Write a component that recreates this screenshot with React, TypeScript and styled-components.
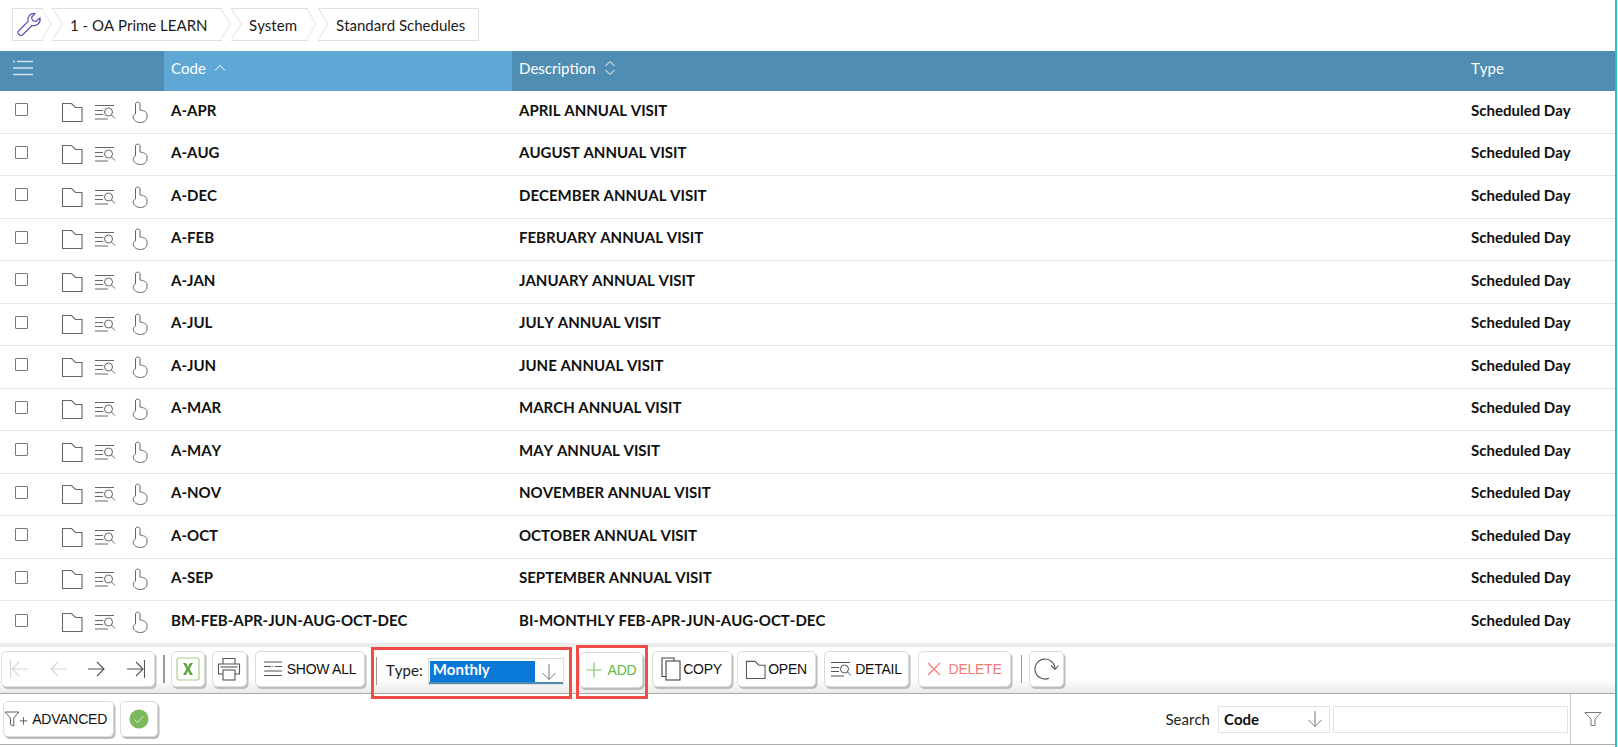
import React from "react";
import styled, { createGlobalStyle } from "styled-components";

const Global = createGlobalStyle`
  html, body { margin: 0; padding: 0; background: #fff; overflow: hidden; }
  body { font-family: Lato, "Open Sans", sans-serif; color: #111; font-kerning: none; }
`;

const Page = styled.div`
  width: 1618px; height: 747px; box-sizing: border-box; display: flex; flex-direction: column;
  overflow: hidden; position: relative;
`;
const RightEdge = styled.div`
  position: absolute; top: 0; bottom: 0; right: 1px; width: 2px; background: #2fbcc9;
`;
const Main = styled.div`width: 1615px; display: flex; flex-direction: column; flex: 1; min-height: 0; padding-bottom: 2px;`;

const Breadcrumbs = styled.nav`
  height: 51px; box-sizing: border-box; padding: 8px 0 10px 12px; display: flex; align-items: stretch; flex-shrink: 0;
`;
const Crumb = styled.div<{ $first?: boolean; $last?: boolean; $w: number; $ml: number; $pl: number }>`
  position: relative; box-sizing: border-box; width: ${p => p.$w}px; margin-left: ${p => p.$ml}px;
  padding-left: ${p => p.$pl}px; display: flex; align-items: center;
  border: 1.5px solid #e0e0e0; border-right-width: ${p => (p.$last ? "1.5px" : "0")};
  border-left-width: ${p => (p.$first ? "1.5px" : "0")};
  font-size: 15px; color: #1b1b1b; white-space: nowrap; background: transparent;
  &::after {
    content: ${p => (p.$last ? "none" : '""')}; position: absolute; right: -10px; top: 4px; width: 22px; height: 22px;
    box-sizing: border-box; border-top: 1.5px solid #e0e0e0; border-right: 1.5px solid #e0e0e0;
    background: #fff; transform: scaleX(0.62) rotate(45deg); z-index: 1;
  }
  &::before {
    content: ${p => (p.$first ? "none" : '""')}; position: absolute; left: -10px; top: 4px; width: 22px; height: 22px;
    box-sizing: border-box; border-top: 1.5px solid #e0e0e0; border-right: 1.5px solid #e0e0e0;
    background: transparent; transform: scaleX(0.62) rotate(45deg);
  }
`;
const WrenchSlot = styled.span`display: inline-flex; position: relative; z-index: 2;`;

const HeaderRow = styled.div`
  display: grid; grid-template-columns: 164px 348px 952px 151px; height: 40px; background: #4f8db3;
  color: #fff; font-size: 15px; flex-shrink: 0;
`;
const HeaderCell = styled.div<{ $active?: boolean }>`
  display: flex; align-items: center; gap: 8px; padding: 0 0 6px 7px; box-sizing: border-box;
  background: ${p => (p.$active ? "#5fa8d6" : "transparent")};
`;
const HeaderIconCell = styled.div`display: flex; align-items: center; padding: 0 0 6px 12px;`;

const Row = styled.div`
  display: grid; grid-template-columns: 164px 348px 952px 151px; height: 42.5px; box-sizing: border-box;
  border-bottom: 1.5px solid #e6e6e6; align-items: center; font-size: 15px; font-weight: 700; color: #111;
  flex-shrink: 0; &:last-of-type { border-bottom: none; }
`;
const Actions = styled.div`display: flex; align-items: center; padding-left: 15px;`;
const Check = styled.div`
  width: 13px; height: 13px; box-sizing: border-box; border: 1.5px solid #777; border-radius: 1px; margin-right: 33px; margin-top: -4px;
`;
const Cell = styled.div`padding-left: 7px; white-space: nowrap; margin-top: -4px;`;
const ActionIcon = styled.span<{ $mr: number }>`display: inline-flex; margin-right: ${p => p.$mr}px;`;

const Rows = styled.div`flex: 1; min-height: 0; overflow: hidden;`;

const Toolbar = styled.div`
  height: 51px; box-sizing: border-box; flex-shrink: 0; display: flex; align-items: center; padding: 0 0 2px 1px;
  background: linear-gradient(#fff 0, #fff 70%, #e9e9e9 100%);
  border-top: 4px solid #ececec; border-bottom: 1.5px solid #aaa;
  position: relative;
`;
const BtnBase = styled.button<{ $w: number; $ml?: number; $color?: string; $gap?: number; $mt?: number; $pr?: number }>`
  width: ${p => p.$w}px; height: 36px; margin-left: ${p => p.$ml ?? 0}px; margin-top: ${p => p.$mt ?? 0}px; box-sizing: border-box; flex-shrink: 0;
  display: inline-flex; align-items: center; justify-content: center; gap: ${p => p.$gap ?? 4}px; padding: 0 ${p => p.$pr ?? 0}px 0 0;
  background: #fff; border: 1px solid #dcdcdc; border-radius: 5px; box-shadow: 1.5px 2px 0 #bdbdbd;
  font-family: "Liberation Sans", Arial, sans-serif; font-size: 14px; letter-spacing: -0.25px; color: ${p => p.$color ?? "#111"};
`;
const Nav = styled(BtnBase)`justify-content: space-between; padding: 0 8px 0 7px;`;
const Sep = styled.div<{ $ml: number; $mt?: number }>`width: 1.5px; height: 28px; background: #9a9a9a; margin-left: ${p => p.$ml}px; margin-top: ${p => p.$mt ?? 0}px; flex-shrink: 0;`;
const Annotated = styled.div<{ $w: number; $ml: number; $h: number; $mt: number }>`
  width: ${p => p.$w}px; height: ${p => p.$h}px; margin-left: ${p => p.$ml}px; margin-top: ${p => p.$mt}px; box-sizing: border-box; flex-shrink: 0;
  border: 3px solid #ef4b47; display: flex; align-items: center; position: relative; z-index: 2;
`;
const TypeLabel = styled.span`font-size: 15px; color: #1b1b1b; margin-left: 9px; margin-top: -6px;`;
const TypeSelect = styled.div`
  width: 136px; height: 27px; margin-left: 5px; margin-top: -3px; box-sizing: border-box; border: 1px solid #ddd; padding: 2px 1px 1px 1px;
  display: flex; align-items: stretch; justify-content: space-between; position: relative; box-shadow: inset 0 -2px 0 #4f8db3; background: #fff;
`;
const Highlight = styled.span`
  display: block; width: 105px; height: 21px; background: #0a78d7; color: #fff; font-weight: 700; font-size: 15px; padding-left: 3px; line-height: 17px; box-sizing: border-box;
`;
const SelectArrow = styled.span`display: inline-flex; margin-right: 5px; align-items: center;`;

const BottomBar = styled.div`
  height: 51px; box-sizing: border-box; flex-shrink: 0; display: flex; align-items: center; padding: 0 0 0 3px; border-bottom: 1.5px solid #aaa; position: relative;
`;
const Spacer = styled.div`flex: 1;`;
const SearchLabel = styled.span`font-size: 15px; color: #222; margin-right: 8px;`;
const SearchSelect = styled.div`
  width: 112px; height: 27px; box-sizing: border-box; border: 1px solid #e2e2e2; display: flex; align-items: center; justify-content: space-between;
  font-size: 15px; font-weight: 700; padding: 0 6px 0 5px; color: #111;
`;
const SearchInput = styled.input`
  width: 235px; height: 27px; margin-left: 3px; box-sizing: border-box; border: 1px solid #e2e2e2; background: #fff; outline: none;
`;
const FilterBox = styled.div`
  width: 45px; height: 100%; margin-left: 2px; border-left: 1.5px solid #c9c9c9; display: flex; align-items: center; justify-content: center; box-sizing: border-box;
`;

const Folder = ({ s = 22, c = "#666" }: { s?: number; c?: string }) => (
  <svg width={s} height={s} viewBox="0 0 22 22" fill="none" stroke={c} strokeWidth="1.1">
    <path d="M1.5 20.5V2.5H10.5L14.5 6.5H21V20.5Z" />
  </svg>
);
const Detail = ({ c = "#666" }: { c?: string }) => (
  <svg width="22" height="18" viewBox="0 0 22 18" fill="none" stroke={c} strokeWidth="1">
    <path d="M1 2.5H20M1 7.5H9M1 11.5H9M1 16H14" />
    <circle cx="14.5" cy="9" r="4" />
    <path d="M17.5 12L21 15.5" />
  </svg>
);
const Hand = () => (
  <svg width="16" height="22" viewBox="0 0 16 22" fill="none" stroke="#666" strokeWidth="1">
    <path d="M3.5 13V3C3.5 .5 8 .5 8 3V9C11 9.5 15 10.5 15 13.5V16C15 19.5 12 21.5 8.500 21.5C5 21.5 1.200 19.5 1.200 16C1.200 15 2 13.800 3.500 13Z" />
  </svg>
);
const Wrench = () => (
  <svg width="26" height="26" viewBox="0 0 26 26" fill="none" stroke="#6a4fb8" strokeWidth="1.2">
    <path d="M2.500 19L12 9.500C11 5 14 1 19 1.500L15.500 5.500L16.500 8.500L20 9.500L24 6C25 11 20.500 14.500 16 13.500L6.500 23C4.500 25 .5 21 2.500 19Z" />
  </svg>
);
const ListIcon = () => (
  <svg width="22" height="16" viewBox="0 0 22 16" fill="none" stroke="#cfe3ef" strokeWidth="1.4">
    <path d="M1 1.500H3M5 1.500H21M1 8H21M1 14.500H21" />
  </svg>
);
const SortUp = () => (
  <svg width="12" height="8" viewBox="0 0 12 8" fill="none" stroke="#fff" strokeWidth="1"><path d="M1 6.500L6 1.500L11 6.500" /></svg>
);
const SortBoth = () => (
  <svg width="12" height="16" viewBox="0 0 12 16" fill="none" stroke="#fff" strokeWidth="1"><path d="M1.500 6L6 1.500L10.500 6M1.500 10L6 14.500L10.500 10" /></svg>
);
const Arrow = ({ dir, bar, c }: { dir: "l" | "r"; bar?: boolean; c: string }) => (
  <svg width="20" height="18" viewBox="0 0 20 18" fill="none" stroke={c} strokeWidth="1.1">
    {dir === "r" ? <path d="M1 9H17M10 2L17 9L10 16" /> : <path d="M19 9H3M10 2L3 9L10 16" />}
    {bar && (dir === "r" ? <path d="M18.500 0V18" /> : <path d="M1.500 0V18" />)}
  </svg>
);
const Excel = () => (
  <svg width="24" height="24" viewBox="0 0 24 24">
    <rect x="1" y="1" width="22" height="22" rx="2" fill="#fff" stroke="#a4cf88" strokeWidth="1.2" />
    <path d="M7 6H10L12 10L14 6H17L13.600 12L17 18H14L12 14L10 18H7L10.400 12Z" fill="#5da63c" />
  </svg>
);
const Printer = () => (
  <svg width="24" height="24" viewBox="0 0 24 24" fill="none" stroke="#555" strokeWidth="1.1">
    <path d="M6 7V1.500H18V7M6 17H1.500V7H22.500V17H18" />
    <rect x="6" y="13" width="12" height="10" />
    <path d="M3.500 10H20.500" />
  </svg>
);
const ShowAll = () => (
  <svg width="20" height="18" viewBox="0 0 20 18" fill="none" stroke="#555" strokeWidth="1.1">
    <path d="M1 2H19M1 6.500H8M12 6.500H19M1 11H19M1 15.500H19" />
    <path d="M9.500 6.500H10.500" />
  </svg>
);
const Plus = () => (
  <svg width="18" height="18" viewBox="0 0 18 18" fill="none" stroke="#7fc66a" strokeWidth="1.2"><path d="M9 1.500V16.500M1.500 9H16.500" /></svg>
);
const Copy = () => (
  <svg width="20" height="24" viewBox="0 0 20 24" fill="none" stroke="#444" strokeWidth="1.1">
    <path d="M5 19.500H1V1H13V4" /><rect x="5" y="4" width="14" height="19" fill="#fff" />
  </svg>
);
const Cross = () => (
  <svg width="14" height="14" viewBox="0 0 14 14" fill="none" stroke="#f47a78" strokeWidth="1.2"><path d="M1 1L13 13M13 1L1 13" /></svg>
);
const Refresh = () => (
  <svg width="26" height="24" viewBox="0 0 26 24" fill="none" stroke="#555" strokeWidth="1.1">
    <path d="M15 21.200A10 10 0 1 1 21 12" /><path d="M17 8.500L21 12.500L24.500 8.500" />
  </svg>
);
const FunnelPlus = () => (
  <svg width="26" height="18" viewBox="0 0 26 18" fill="none" stroke="#555" strokeWidth="1">
    <path d="M1 1.500H16L10.500 8V16.500L7 15V8Z" /><path d="M17 11H25M21 7V15" />
  </svg>
);
const Funnel = () => (
  <svg width="18" height="16" viewBox="0 0 18 16" fill="none" stroke="#777" strokeWidth="1">
    <path d="M1 1.500H17L11 8V14.500H7V8Z" />
  </svg>
);
const GreenCheck = () => (
  <svg width="20" height="20" viewBox="0 0 20 20">
    <circle cx="10" cy="10" r="9.500" fill="#7cb95a" /><path d="M5.500 10.500L8.500 13.500L14.500 7" fill="none" stroke="#d7edc9" strokeWidth="1" />
  </svg>
);
const DownArrow = () => (
  <svg width="16" height="18" viewBox="0 0 16 18" fill="none" stroke="#777" strokeWidth="1"><path d="M8 1V16.500M1.500 10L8 16.500L14.500 10" /></svg>
);

const rows: [string, string][] = [
  ["A-APR", "APRIL ANNUAL VISIT"],
  ["A-AUG", "AUGUST ANNUAL VISIT"],
  ["A-DEC", "DECEMBER ANNUAL VISIT"],
  ["A-FEB", "FEBRUARY ANNUAL VISIT"],
  ["A-JAN", "JANUARY ANNUAL VISIT"],
  ["A-JUL", "JULY ANNUAL VISIT"],
  ["A-JUN", "JUNE ANNUAL VISIT"],
  ["A-MAR", "MARCH ANNUAL VISIT"],
  ["A-MAY", "MAY ANNUAL VISIT"],
  ["A-NOV", "NOVEMBER ANNUAL VISIT"],
  ["A-OCT", "OCTOBER ANNUAL VISIT"],
  ["A-SEP", "SEPTEMBER ANNUAL VISIT"],
  ["BM-FEB-APR-JUN-AUG-OCT-DEC", "BI-MONTHLY FEB-APR-JUN-AUG-OCT-DEC"],
];

export default function App() {
  return (
    <Page>
      <Global />
      <RightEdge />
      <Main>
        <Breadcrumbs>
          <Crumb $first $w={31} $ml={0} $pl={3}><WrenchSlot><Wrench /></WrenchSlot></Crumb>
          <Crumb $w={170} $ml={9} $pl={18}>1 - OA Prime LEARN</Crumb>
          <Crumb $w={77} $ml={9} $pl={18}>System</Crumb>
          <Crumb $last $w={161} $ml={10} $pl={18}>Standard Schedules</Crumb>
        </Breadcrumbs>
        <HeaderRow>
          <HeaderIconCell><ListIcon /></HeaderIconCell>
          <HeaderCell $active>Code <SortUp /></HeaderCell>
          <HeaderCell>Description <SortBoth /></HeaderCell>
          <HeaderCell>Type</HeaderCell>
        </HeaderRow>
        <Rows>
          {rows.map(([code, desc]) => (
            <Row key={code}>
              <Actions>
                <Check />
                <ActionIcon $mr={11}><Folder /></ActionIcon>
                <ActionIcon $mr={16}><Detail /></ActionIcon>
                <ActionIcon $mr={0}><Hand /></ActionIcon>
              </Actions>
              <Cell>{code}</Cell>
              <Cell>{desc}</Cell>
              <Cell>Scheduled Day</Cell>
            </Row>
          ))}
        </Rows>
        <Toolbar>
          <Nav $w={154}>
            <Arrow dir="l" bar c="#d4d4d4" />
            <Arrow dir="l" c="#d4d4d4" />
            <Arrow dir="r" c="#555" />
            <Arrow dir="r" bar c="#555" />
          </Nav>
          <Sep $ml={8} />
          <BtnBase $w={34} $ml={6}><Excel /></BtnBase>
          <BtnBase $w={35} $ml={7}><Printer /></BtnBase>
          <BtnBase $w={110} $ml={8} $gap={4}><ShowAll /> SHOW ALL</BtnBase>
          <Annotated $w={201} $ml={6} $h={52} $mt={7}>
            <Sep $ml={2} $mt={-4} />
            <TypeLabel>Type:</TypeLabel>
            <TypeSelect>
              <Highlight>Monthly</Highlight>
              <SelectArrow><DownArrow /></SelectArrow>
            </TypeSelect>
          </Annotated>
          <Annotated $w={72} $ml={4} $h={54} $mt={5}>
            <BtnBase $w={64} $ml={0} $mt={-3} $color="#5cbb45" $gap={5}><Plus /> ADD</BtnBase>
          </Annotated>
          <BtnBase $w={80} $ml={4} $gap={2}><Copy /> COPY</BtnBase>
          <BtnBase $w={79} $ml={5} $gap={2}><Folder s={21} c="#555" /> OPEN</BtnBase>
          <BtnBase $w={85} $ml={8} $gap={3}><Detail c="#555" /> DETAIL</BtnBase>
          <BtnBase $w={93} $ml={9} $color="#f47a78" $gap={8}><Cross /> DELETE</BtnBase>
          <Sep $ml={10} />
          <BtnBase $w={35} $ml={7}><Refresh /></BtnBase>
        </Toolbar>
        <BottomBar>
          <BtnBase $w={111} $mt={-1} $pr={6}><FunnelPlus /> ADVANCED</BtnBase>
          <BtnBase $w={38} $ml={6} $mt={-1}><GreenCheck /></BtnBase>
          <Spacer />
          <SearchLabel>Search</SearchLabel>
          <SearchSelect>Code <DownArrow /></SearchSelect>
          <SearchInput aria-label="Search" />
          <FilterBox><Funnel /></FilterBox>
        </BottomBar>
      </Main>
    </Page>
  );
}
